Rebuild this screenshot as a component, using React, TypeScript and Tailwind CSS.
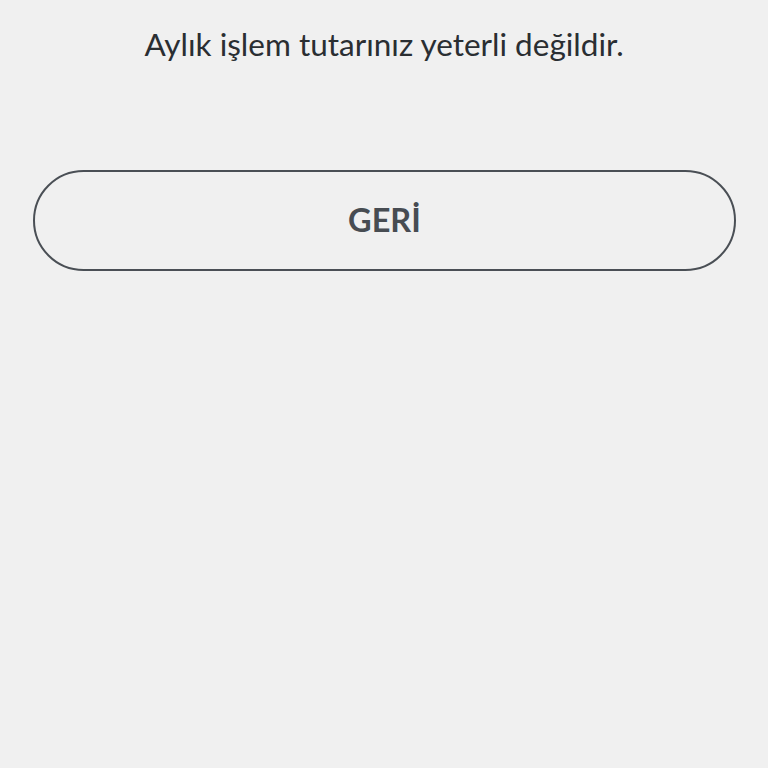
export default function App() {
  return (
    <div className="w-[768px] h-[768px] bg-[#f0f0f0] flex flex-col items-center" style={{ fontFamily: 'Lato, "Open Sans", sans-serif' }}>
      <p className="mt-[24px] text-[31.5px] leading-[40px] text-[#2a2e32] font-normal">Aylık işlem tutarınız yeterli değildir.</p>
      <button className="mt-[106px] w-[703px] h-[101px] ml-[1px] rounded-full border-2 border-[#4a4f55] flex items-center justify-center text-[32.5px] font-bold text-[#474c52]">
        GERİ
      </button>
    </div>
  );
}
